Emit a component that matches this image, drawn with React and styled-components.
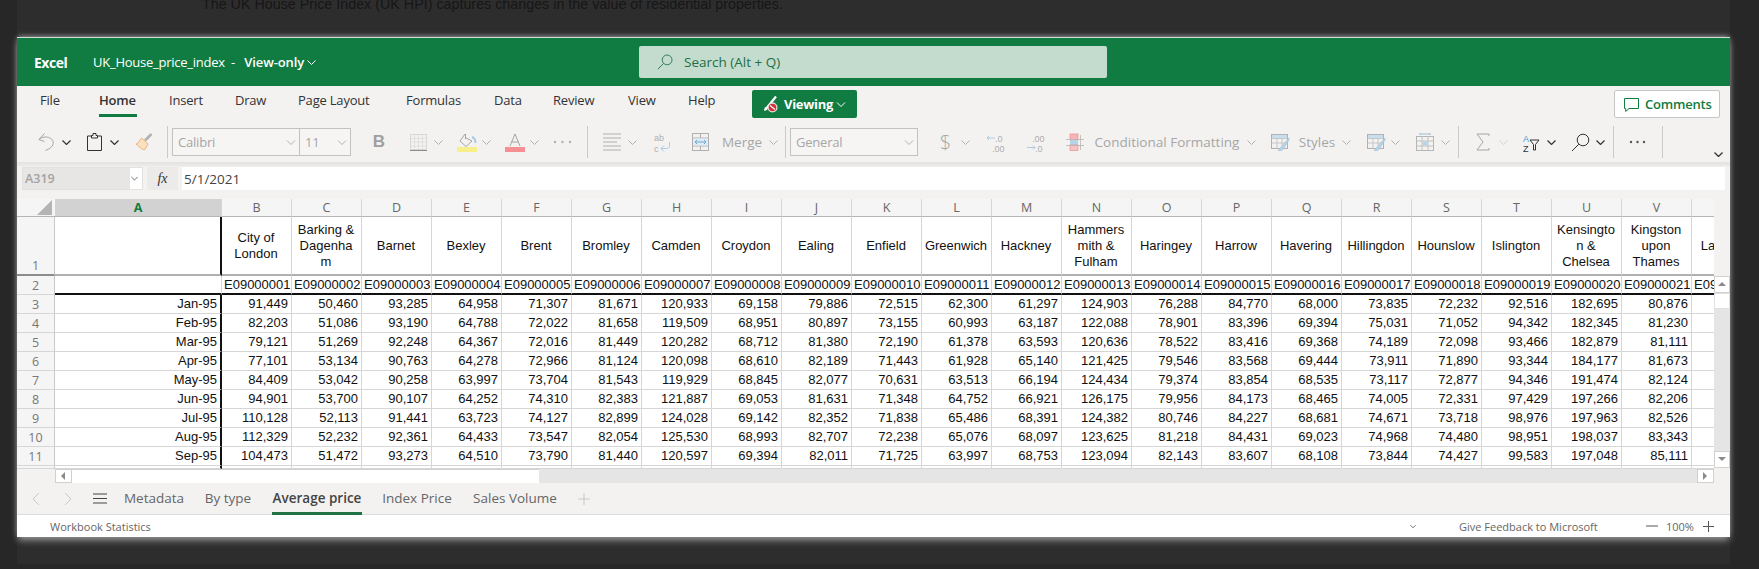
import React from "react";
import styled, { createGlobalStyle } from "styled-components";

const Global = createGlobalStyle`
  html, body { margin: 0; padding: 0; background: #272727; overflow: hidden; }
  * { box-sizing: border-box; }
`;
const UI = `"Open Sans", "Noto Sans", sans-serif`;
const CELL = `"Liberation Sans", Arial, sans-serif`;

const Page = styled.div`width: 1759px; height: 569px; overflow: hidden; background: #272727;`;
const Column = styled.div`width: 1713px; height: 569px; margin-left: 17px; background: #2d2d2d;`;
const BackText = styled.div`
  height: 37px; margin-top: -5px; margin-bottom: 5px; padding-left: 185px;
  font: 14.3px/18px ${CELL}; color: #161616; white-space: nowrap;
`;
const Win = styled.div`
  width: 1713px; height: 500px; display: flex; flex-direction: column;
  background: #f3f2f1; border-top: 1px solid #cfe0d6;
  box-shadow: 0 -2px 5px -1px #8f8f8f, 0 4px 7px -1px #9c9c9c;
`;
const TitleBar = styled.div`
  height: 48px; flex: none; background: #107c41; color: #fff; display: flex; align-items: center; padding-left: 17px;
  font-family: ${UI};
`;
const Brand = styled.span`font-weight: 700; font-size: 14px; letter-spacing: -0.5px; width: 59px; flex: none;`;
const DocName = styled.span`font-size: 13px; letter-spacing: -0.25px; width: 195px; flex: none; display: flex; align-items: center; gap: 3px; white-space: pre;`;
const DocMode = styled.span`font-weight: 600; letter-spacing: -0.1px;`;
const Search = styled.div`
  margin-left: 351px; width: 468px; height: 32px; background: #c3dccd; border-radius: 2px; display: flex; align-items: center;
  padding-left: 18px; gap: 11px; color: #1f6e45; font-size: 13.5px;
`;
const TabRow = styled.div`height: 39px; flex: none; display: flex; align-items: flex-start; font-family: ${UI}; padding-left: 23px;`;
const Tab = styled.div`
  width: ${p => p.$w}px; margin-left: ${p => p.$ml}px; height: 31px; padding-top: 5px; font-size: 13px; letter-spacing: -0.2px; color: #333;
  white-space: nowrap; font-weight: ${p => p.$on ? 600 : 400};
  border-bottom: 3px solid ${p => p.$on ? "#107c41" : "transparent"};
`;
const Viewing = styled.div`
  margin-left: 36px; margin-top: 4px; width: 105px; height: 28px; background: #107c41; border-radius: 2px; color: #fff; font-weight: 700; font-size: 13px;
  display: flex; align-items: center; gap: 3px; padding-left: 9px; letter-spacing: -0.3px;
`;
const Comments = styled.div`
  margin-left: auto; margin-right: 10px; margin-top: 4px; width: 106px; height: 28px; background: #fff; border: 1px solid #c8c6c4; border-radius: 2px;
  color: #107c41; font-weight: 600; font-size: 13px; display: flex; align-items: center; padding-left: 9px; gap: 6px; letter-spacing: -0.2px;
`;
const ToolRow = styled.div`height: 37px; flex: none; display: flex; align-items: center; padding: 0 0 3px 21px; position: relative; font-family: ${UI};`;
const Tool = styled.span`
  margin-left: ${p => p.$ml || 0}px; width: ${p => p.$w}px; flex: none; display: inline-flex; align-items: center; justify-content: center;
  color: ${p => p.$c || "#a6a6a6"}; font-size: 13.5px; white-space: nowrap;
`;
const BoldTool = styled(Tool)`font: 700 17px ${CELL}; color: #a0a0a0;`;
const DollarTool = styled(Tool)`font-size: 20px; font-weight: 300; color: #a6a6a6;`;
const Sep = styled.span`margin-left: ${p => p.$ml}px; width: 1px; height: 32px; background: #cbcbcb; flex: none;`;
const Combo = styled.div`
  margin-left: ${p => p.$ml}px; width: ${p => p.$w}px; height: 28px; flex: none; display: flex; border: 1px solid #c4c2c0; background: #f6f5f4;
  color: #a6a6a6; font-size: 13px; font-family: ${UI}; letter-spacing: -0.2px;
`;
const ComboPart = styled.div`
  width: ${p => p.$w}px; display: flex; align-items: center; justify-content: space-between; padding: 0 3px 0 5px;
  border-right: ${p => p.$split ? "1px solid #c4c2c0" : "0"}; flex: none;
`;
const Collapse = styled.span`position: absolute; left: 1697px; top: 27px; display: flex;`;
const FormulaBar = styled.div`
  height: 28px; flex: none; padding: 5px 5px 0 5px; display: flex; background: linear-gradient(#e3e2e1, #ecebea 4px, #f3f2f1 5px); font-family: ${UI};
`;
const NameBox = styled.div`
  width: 121px; height: 23px; background: linear-gradient(90deg, #e7e6e5 107px, #fff 107px); border: 1px solid #e2e1e0; color: #a3a3a3; font-size: 12.5px; font-weight: 600; padding-left: 2px;
  display: flex; align-items: center; justify-content: space-between; padding-right: 4px;
`;
const FxBox = styled.div`
  width: 31px; height: 23px; margin-left: 4px; background: #ecebea; display: flex; align-items: center; justify-content: center;
  font: italic 400 14px "Liberation Serif", serif; color: #333;
`;
const FormulaInput = styled.div`
  margin-left: 4px; flex: 1; height: 23px; background: #fff; font-size: 13.5px; color: #444; padding-left: 2px; display: flex; align-items: center;
`;
const SheetArea = styled.div`margin-top: 9px; display: flex; flex: none; height: 270px;`;
const Grid = styled.div`width: 1697px; flex: none; overflow: hidden;`;
const VScroll = styled.div`width: 16px; flex: none; display: flex; flex-direction: column;`;
const VSpacer = styled.div`height: 77px; flex: none;`;
const VBtn = styled.div`
  height: 17px; flex: none; background: #fff; border: 1px solid #d0d0d0; display: flex; align-items: center; justify-content: center;
`;
const VThumb = styled.div`height: 16px; flex: none; background: #fff; border: 1px solid #e0e0e0;`;
const VTrack = styled.div`flex: none; height: 142px; background: #e5e5e5;`;
const Row = styled.div`
  display: grid; grid-template-columns: 38px 167px repeat(22, 70px); width: 1675px; height: ${p => p.$h}px;
`;
const ColHead = styled.div`
  background: ${p => p.$sel ? "#d2d2d2" : "#f5f5f5"}; color: ${p => p.$sel ? "#107c41" : "#666"}; font: ${p => p.$sel ? 700 : 400} 12.5px ${UI};
  display: flex; align-items: center; justify-content: center; border-right: 1px solid #d6d6d6; border-bottom: 1px solid #b5b5b5;
`;
const Corner = styled.div`
  background: #f5f5f5; border-bottom: 1px solid #b5b5b5; display: flex; justify-content: flex-end; align-items: flex-end; padding: 0 3px 1px 0;
`;
const RowHead = styled.div`
  background: #f5f5f5; color: #777; font: 12.5px ${UI}; display: flex; align-items: ${p => p.$end ? "flex-end" : "center"}; justify-content: center;
  border-right: 1px solid #c8c8c8; border-bottom: ${p => p.$dark ? "2px solid #8c8c8c" : "1px solid #d6d6d6"};
`;
const Cell = styled.div`
  background: #fff; font: 13px/16px ${CELL}; color: #111; overflow: hidden; white-space: pre-line; padding: 0 3px 0 2px;
  display: flex; align-items: center; justify-content: ${p => p.$align === "center" ? "center" : p.$align === "left" ? "flex-start" : "flex-end"};
  text-align: ${p => p.$align || "right"};
  border-right: ${p => p.$black ? "2px solid #111" : "1px solid #d6d6d6"};
  border-bottom: ${p => p.$under === "black" ? "2px solid #111" : p.$under === "grey" ? "2px solid #b0b0b0" : "1px solid #d6d6d6"};
`;
const HScroll = styled.div`height: 14px; flex: none; display: flex; padding-left: 38px;`;
const HBtn = styled.div`
  width: ${p => p.$w}px; flex: none; background: #fff; border: 1px solid #d0d0d0; display: flex; align-items: center; justify-content: center;
`;
const HThumb = styled.div`width: 467px; flex: none; background: #fff; border-top: 1px solid #d0d0d0;`;
const HTrack = styled.div`width: 1158px; flex: none; background: #e5e5e5;`;
const SheetTabs = styled.div`
  height: 32px; flex: none; border-bottom: 1px solid #dcdcdc; display: flex; align-items: center; padding-left: 13px; font-family: ${UI};
`;
const Nav = styled.span`margin-left: ${p => p.$ml || 0}px; width: ${p => p.$w}px; display: flex; justify-content: center; flex: none;`;
const NavGap = styled.span`width: 16px; flex: none;`;
const Sheet = styled.div`
  margin-left: ${p => p.$ml}px; width: ${p => p.$w}px; height: 32px; display: flex; align-items: center; justify-content: center; flex: none;
  font-size: 13.5px; color: ${p => p.$on ? "#444" : "#666"}; font-weight: ${p => p.$on ? 600 : 400}; white-space: nowrap;
  border-bottom: 3px solid ${p => p.$on ? "#217346" : "transparent"}; padding-top: 2px;
`;
const Status = styled.div`
  flex: 1; background: #fff; display: flex; align-items: center; font: 11px ${UI}; color: #666; padding-left: 33px;
`;
const StatusText = styled.span`margin-left: ${p => p.$ml || 0}px; white-space: nowrap; width: ${p => p.$w}px; flex: none;`;

const C = { g: "#a6a6a6", b: "#a9cbe4", r: "#f2a9a9", d: "#333", l: "#b0b0b0" };
const SMALL = "Liberation Sans";
const Svg = ({ w, h = 18, children, vb }) => (
  <svg width={w} height={h} viewBox={vb || `0 0 ${w} ${h}`} fill="none" style={{ display: "block", flex: "none" }}>{children}</svg>
);
const Chev = ({ c = C.l, w = 9, sw = 1 }) => (
  <Svg w={w} h={5} vb="0 0 9 5"><path d="M.5.5 4.500 4.500 8.500.5" stroke={c} strokeWidth={sw} /></Svg>
);
const Undo = () => (
  <Svg w={17}><path d="M6.500 .5 1 6.500 6.500 8.500" stroke={C.g} /><path d="M1 6.500C4 3.500 10 3 13.500 6c3.500 3.500 2 8.500-6 11.500" stroke={C.g} /></Svg>
);
const Clip = () => (
  <Svg w={15}><path d="M4.500 3H.5v14.500h14V3h-4" stroke={C.d} /><path d="M4.500 5V2.500H6V.5h3v2h1.500V5z" stroke={C.d} /></Svg>
);
const Brush = () => (
  <Svg w={18}><path d="M16.500 1 10 7.500" stroke="#b0b0b0" strokeWidth="2.500" /><path d="M6.500 5 13 11l-3 5.500H7.500L1 11l2-1z" fill="#fbe0c2" stroke="#eeb67c" /></Svg>
);
const Borders = () => (
  <Svg w={17}>
    <rect x=".5" y="1.500" width="16" height="15" stroke="#bdbdbd" strokeDasharray="1 1" />
    <path d="M8.500 1.500v15M.5 9h16M.5 5.500h16M.5 13h16M4.500 1.500v15M12.500 1.500v15" stroke="#d0d0d0" strokeDasharray="1 1" />
    <path d="M0 17.500h17" stroke="#8c8c8c" />
  </Svg>
);
const Fill = () => (
  <Svg w={20} h={19}>
    <path d="M8 1 3 8l6 5.500 6-5.500-6-3" stroke={C.g} /><path d="M8.500 1v5" stroke={C.g} />
    <path d="M15 4c2.500 1 3.500 3 3.500 6" stroke={C.b} strokeWidth="2" />
    <rect y="14" width="20" height="5" fill="#f7f08a" />
  </Svg>
);
const FontA = () => (
  <Svg w={20} h={19}>
    <path d="M5 13 10 1l5 12M6.500 9h7" stroke={C.g} />
    <rect y="14" width="20" height="5" fill="#f58f93" />
  </Svg>
);
const Dots = ({ c = "#b0b0b0", w = 19 }) => (
  <Svg w={w} h={4}><circle cx="2" cy="2" r="1.200" fill={c} /><circle cx={w / 2} cy="2" r="1.200" fill={c} /><circle cx={w - 2} cy="2" r="1.200" fill={c} /></Svg>
);
const Align = () => (
  <Svg w={18}><path d="M0 1h18M0 5h18M0 9h14M0 13h18M0 17h18" stroke="#b0b0b0" /></Svg>
);
const Wrap = () => (
  <Svg w={17} h={19}>
    <text x="0" y="8" fontSize="9" fill="#aeaeae" fontFamily={SMALL}>ab</text>
    <text x="0" y="18.500" fontSize="9" fill="#aeaeae" fontFamily={SMALL}>c</text>
    <path d="M15.500 9v3.500c0 2-1 3-3 3H7M10 12.500 7 15.500l3 3" stroke={C.b} />
  </Svg>
);
const Merge = () => (
  <Svg w={17}>
    <rect x=".5" y=".5" width="16" height="17" stroke="#b0b0b0" /><path d="M0 5h17M0 13h17M8.500 0v5M8.500 13v5" stroke="#b0b0b0" />
    <rect x="1" y="5.500" width="15" height="7" fill="#dcebf5" />
    <path d="M3 9h11M5 7 3 9l2 2M12 7l2 2-2 2" stroke="#6fa9d2" />
  </Svg>
);
const DecDec = ({ inc }) => (
  <Svg w={18} h={19}>
    <text x={inc ? 5 : 8} y="8.500" fontSize="9" fill="#aeaeae" fontFamily={SMALL}>{inc ? ".00" : ".0"}</text>
    <text x={inc ? 8 : 5} y="19" fontSize="9" fill="#aeaeae" fontFamily={SMALL}>{inc ? ".0" : ".00"}</text>
    {inc
      ? <path d="M0 14.500h8M6 12.500l2 2-2 2" stroke={C.b} />
      : <path d="M8 5H0M2 3 0 5l2 2" stroke={C.b} />}
  </Svg>
);
const Cond = () => (
  <Svg w={18}>
    <rect x="4" y="1" width="8" height="6" fill="#f6b4b4" stroke="#e98f8f" strokeWidth=".7" />
    <rect x="4" y="7" width="8" height="5" fill="#b7d3e8" />
    <rect x="4" y="12" width="8" height="5.500" fill="#f6c2c2" stroke="#e98f8f" strokeWidth=".7" />
    <path d="M0 6.500h18M0 12.500h18M14.500 2v15" stroke="#b5b5b5" strokeWidth=".8" />
  </Svg>
);
const Styles = () => (
  <Svg w={19}>
    <rect x=".5" y="1.500" width="16" height="14" stroke="#b0b0b0" />
    <path d="M.5 5.500h16M6 1.500v14M11 1.500v14M.5 10h16" stroke="#c6c6c6" />
    <rect x="1" y="2" width="15" height="3" fill="#c9dfee" />
    <path d="M18 5 10 14l-3 4c3 0 5-1 6-3l5-8z" fill="#b7d3e8" stroke="#9cc0da" strokeWidth=".6" />
  </Svg>
);
const Cells = () => (
  <Svg w={18}>
    <rect x=".5" y="3.500" width="17" height="14" stroke="#b5b5b5" />
    <path d="M6 3.500v14M12 3.500v14M.5 8h17M.5 13h17" stroke="#c0c0c0" />
    <rect x="6.500" y="8.500" width="5" height="4" fill="#b7d3e8" />
    <path d="M4 1h10M4 0v2M14 0v2" stroke="#9cc0da" />
  </Svg>
);
const Sigma = () => (
  <Svg w={14}><path d="M13 3V1H1l6 8-6 8h12v-2" stroke="#a6a6a6" /></Svg>
);
const Sort = () => (
  <Svg w={17} h={19}>
    <text x="0" y="8.500" fontSize="9" fill="#4f97cd" fontFamily={SMALL}>A</text>
    <text x="0" y="19" fontSize="9" fill="#333" fontFamily={SMALL}>Z</text>
    <path d="M7 7h9l-3.500 4.500V17h-2v-5.500z" stroke="#333" />
  </Svg>
);
const Find = ({ c = "#333", w = 19 }) => (
  <Svg w={w} h={w} vb="0 0 19 19"><circle cx="12" cy="7" r="5.800" stroke={c} /><path d="M7.800 11.200 1 18" stroke={c} /></Svg>
);
const Pencil = () => (
  <Svg w={20}>
    <path d="M15 1.500 4 15" stroke="#fff" strokeWidth="2.200" /><path d="M3 16l1-4 3 2z" fill="#fff" />
    <circle cx="11.500" cy="12.500" r="5" fill="#e8e6e4" /><circle cx="11.500" cy="12.500" r="3.800" fill="#d13438" />
    <path d="m9 10.500 5 4" stroke="#fff" strokeWidth="1.200" />
  </Svg>
);
const Bubble = () => (
  <Svg w={15} h={15}><path d="M.5 1.500h14v10H5L1.700 14.500V11.500H.5z" stroke="#107c41" /></Svg>
);
const Triangle = ({ d }) => {
  const p = { up: "M0 5 4 1l4 4z", down: "M0 1l4 4 4-4z", left: "M5 0 1 4l4 4z", right: "M1 0l4 4-4 4z" }[d];
  return <Svg w={8} h={8} vb="0 0 8 8"><path d={p} fill="#8a8a8a" /></Svg>;
};

const columns = "ABCDEFGHIJKLMNOPQRSTUVW".split("");
const names = ["City of\nLondon", "Barking &\nDagenha\nm", "Barnet", "Bexley", "Brent", "Bromley", "Camden", "Croydon", "Ealing", "Enfield", "Greenwich", "Hackney", "Hammers\nmith &\nFulham", "Haringey", "Harrow", "Havering", "Hillingdon", "Hounslow", "Islington", "Kensingto\nn &\nChelsea", "Kingston\nupon\nThames", "Lambeth"];
const months = ["Jan-95", "Feb-95", "Mar-95", "Apr-95", "May-95", "Jun-95", "Jul-95", "Aug-95", "Sep-95"];
const data = [
  "91,449 50,460 93,285 64,958 71,307 81,671 120,933 69,158 79,886 72,515 62,300 61,297 124,903 76,288 84,770 68,000 73,835 72,232 92,516 182,695 80,876",
  "82,203 51,086 93,190 64,788 72,022 81,658 119,509 68,951 80,897 73,155 60,993 63,187 122,088 78,901 83,396 69,394 75,031 71,052 94,342 182,345 81,230",
  "79,121 51,269 92,248 64,367 72,016 81,449 120,282 68,712 81,380 72,190 61,378 63,593 120,636 78,522 83,416 69,368 74,189 72,098 93,466 182,879 81,111",
  "77,101 53,134 90,763 64,278 72,966 81,124 120,098 68,610 82,189 71,443 61,928 65,140 121,425 79,546 83,568 69,444 73,911 71,890 93,344 184,177 81,673",
  "84,409 53,042 90,258 63,997 73,704 81,543 119,929 68,845 82,077 70,631 63,513 66,194 124,434 79,374 83,854 68,535 73,117 72,877 94,346 191,474 82,124",
  "94,901 53,700 90,107 64,252 74,310 82,383 121,887 69,053 81,631 71,348 64,752 66,921 126,175 79,956 84,173 68,465 74,005 72,331 97,429 197,266 82,206",
  "110,128 52,113 91,441 63,723 74,127 82,899 124,028 69,142 82,352 71,838 65,486 68,391 124,382 80,746 84,227 68,681 74,671 73,718 98,976 197,963 82,526",
  "112,329 52,232 92,361 64,433 73,547 82,054 125,530 68,993 82,707 72,238 65,076 68,097 123,625 81,218 84,431 69,023 74,968 74,480 98,951 198,037 83,343",
  "104,473 51,472 93,273 64,510 73,790 81,440 120,597 69,394 82,011 71,725 63,997 68,753 123,094 82,143 83,607 68,108 73,844 74,427 99,583 197,048 85,111",
].map(s => s.split(" "));
const tabs = [["File", 20, 0], ["Home", 38, 39], ["Insert", 34, 32], ["Draw", 31, 32], ["Page Layout", 75, 32], ["Formulas", 55, 33], ["Data", 28, 33], ["Review", 43, 31], ["View", 29, 32], ["Help", 28, 31]];
const sheets = [["Metadata", 62, 0], ["By type", 48, 19], ["Average price", 90, 20], ["Index Price", 70, 20], ["Sales Volume", 84, 21]];

export default function App() {
  return (
    <Page>
      <Global />
      <Column>
        <BackText>The UK House Price Index (UK HPI) captures changes in the value of residential properties.</BackText>
        <Win>
          <TitleBar>
            <Brand>Excel</Brand>
            <DocName>UK_House_price_index  -  <DocMode>View-only</DocMode> <Chev c="#fff" /></DocName>
            <Search><Find c="#1f6e45" w={16} />Search (Alt + Q)</Search>
          </TitleBar>
          <TabRow>
            {tabs.map(([t, w, ml]) => <Tab key={t} $w={w} $ml={ml} $on={t === "Home"}>{t}</Tab>)}
            <Viewing><Pencil />Viewing <Chev c="#fff" w={10} /></Viewing>
            <Comments><Bubble />Comments</Comments>
          </TabRow>
          <ToolRow>
            <Tool $w={17}><Undo /></Tool>
            <Tool $w={9} $ml={7}><Chev c={C.d} sw={1.2} /></Tool>
            <Tool $w={15} $ml={16}><Clip /></Tool>
            <Tool $w={9} $ml={8}><Chev c={C.d} sw={1.2} /></Tool>
            <Tool $w={18} $ml={16}><Brush /></Tool>
            <Sep $ml={14} />
            <Combo $ml={4} $w={179}>
              <ComboPart $w={127} $split>Calibri <Chev w={10} /></ComboPart>
              <ComboPart $w={50}>11 <Chev w={10} /></ComboPart>
            </Combo>
            <BoldTool $w={12} $ml={22}>B</BoldTool>
            <Tool $w={17} $ml={25}><Borders /></Tool>
            <Tool $w={9} $ml={7}><Chev /></Tool>
            <Tool $w={20} $ml={14}><Fill /></Tool>
            <Tool $w={9} $ml={5}><Chev /></Tool>
            <Tool $w={20} $ml={14}><FontA /></Tool>
            <Tool $w={9} $ml={5}><Chev /></Tool>
            <Tool $w={19} $ml={14}><Dots /></Tool>
            <Sep $ml={15} />
            <Tool $w={18} $ml={15}><Align /></Tool>
            <Tool $w={9} $ml={7}><Chev /></Tool>
            <Tool $w={17} $ml={17}><Wrap /></Tool>
            <Tool $w={17} $ml={21}><Merge /></Tool>
            <Tool $w={42} $ml={12}>Merge</Tool>
            <Tool $w={9} $ml={6}><Chev /></Tool>
            <Sep $ml={7} />
            <Combo $ml={4} $w={128}><ComboPart $w={126}>General <Chev w={10} /></ComboPart></Combo>
            <DollarTool $w={9} $ml={23}>$</DollarTool>
            <Tool $w={9} $ml={11}><Chev /></Tool>
            <Tool $w={18} $ml={17}><DecDec /></Tool>
            <Tool $w={18} $ml={22}><DecDec inc /></Tool>
            <Tool $w={18} $ml={21}><Cond /></Tool>
            <Tool $w={144} $ml={11}>Conditional Formatting</Tool>
            <Tool $w={9} $ml={8}><Chev /></Tool>
            <Tool $w={19} $ml={15}><Styles /></Tool>
            <Tool $w={34} $ml={10}>Styles</Tool>
            <Tool $w={9} $ml={8}><Chev /></Tool>
            <Tool $w={18} $ml={16}><Styles /></Tool>
            <Tool $w={9} $ml={6}><Chev /></Tool>
            <Tool $w={18} $ml={16}><Cells /></Tool>
            <Tool $w={9} $ml={7}><Chev /></Tool>
            <Sep $ml={8} />
            <Tool $w={14} $ml={17}><Sigma /></Tool>
            <Tool $w={9} $ml={9}><Chev c="#d0d0d0" /></Tool>
            <Tool $w={17} $ml={15}><Sort /></Tool>
            <Tool $w={9} $ml={7}><Chev c={C.d} sw={1.2} /></Tool>
            <Tool $w={19} $ml={15}><Find /></Tool>
            <Tool $w={9} $ml={6}><Chev c={C.d} sw={1.2} /></Tool>
            <Sep $ml={8} />
            <Tool $w={17} $ml={15}><Dots c="#555" w={17} /></Tool>
            <Sep $ml={16} />
            <Collapse><Chev c={C.d} sw={1.3} /></Collapse>
          </ToolRow>
          <FormulaBar>
            <NameBox>A319 <Chev c="#666" w={7} sw={1.2} /></NameBox>
            <FxBox>fx</FxBox>
            <FormulaInput>5/1/2021</FormulaInput>
          </FormulaBar>
          <SheetArea>
            <Grid>
              <Row $h={18}>
                <Corner><Svg w={15} h={15}><path d="M15 0v15H0z" fill="#b4b4b4" /></Svg></Corner>
                {columns.map(c => <ColHead key={c} $sel={c === "A"}>{c}</ColHead>)}
              </Row>
              <Row $h={59}>
                <RowHead $end $dark>1</RowHead>
                <Cell $black $under="grey" />
                {names.map(n => <Cell key={n} $align="center" $under="grey">{n}</Cell>)}
              </Row>
              <Row $h={19}>
                <RowHead>2</RowHead>
                <Cell $under="black" />
                {names.map((n, i) => <Cell key={n} $align="left" $under="black">{`E090000${String(i + 1).padStart(2, "0")}`}</Cell>)}
              </Row>
              {months.map((m, i) => (
                <Row key={m} $h={19}>
                  <RowHead>{i + 3}</RowHead>
                  <Cell $black>{m}</Cell>
                  {data[i].map((v, j) => <Cell key={j}>{v}</Cell>)}
                  <Cell />
                </Row>
              ))}
              <Row $h={3}>
                <RowHead />
                <Cell $black />
                {names.map(n => <Cell key={n} />)}
              </Row>
            </Grid>
            <VScroll>
              <VSpacer />
              <VBtn><Triangle d="up" /></VBtn>
              <VThumb />
              <VTrack />
              <VBtn><Triangle d="down" /></VBtn>
            </VScroll>
          </SheetArea>
          <HScroll>
            <HBtn $w={17}><Triangle d="left" /></HBtn>
            <HThumb />
            <HTrack />
            <HBtn $w={17}><Triangle d="right" /></HBtn>
          </HScroll>
          <SheetTabs>
            <Nav $w={12} $ml={0}><Svg w={8} h={14} vb="0 0 8 14"><path d="M7 1 1 7l6 6" stroke="#c8c8c8" /></Svg></Nav>
            <Nav $w={12} $ml={20}><Svg w={8} h={14} vb="0 0 8 14"><path d="m1 1 6 6-6 6" stroke="#c8c8c8" /></Svg></Nav>
            <Nav $w={14} $ml={19}><Svg w={14} h={11} vb="0 0 14 11"><path d="M0 1h14M0 5.500h14M0 10h14" stroke="#444" /></Svg></Nav>
            <NavGap />
            {sheets.map(([t, w, ml]) => <Sheet key={t} $w={w} $ml={ml} $on={t === "Average price"}>{t}</Sheet>)}
            <Nav $w={12} $ml={21}><Svg w={12} h={12} vb="0 0 12 12"><path d="M6 0v12M0 6h12" stroke="#c8c8c8" /></Svg></Nav>
          </SheetTabs>
          <Status>
            <StatusText $w={105}>Workbook Statistics</StatusText>
            <Nav $w={8} $ml={1254}><Chev c="#555" w={6} sw={1.2} /></Nav>
            <StatusText $w={145} $ml={42}>Give Feedback to Microsoft</StatusText>
            <Nav $w={12} $ml={42}><Svg w={12} h={12} vb="0 0 12 12"><path d="M0 6h12" stroke="#555" /></Svg></Nav>
            <StatusText $w={30} $ml={8}>100%</StatusText>
            <Nav $w={11} $ml={7}><Svg w={11} h={11} vb="0 0 11 11"><path d="M5.500 0v11M0 5.500h11" stroke="#555" /></Svg></Nav>
          </Status>
        </Win>
      </Column>
    </Page>
  );
}
